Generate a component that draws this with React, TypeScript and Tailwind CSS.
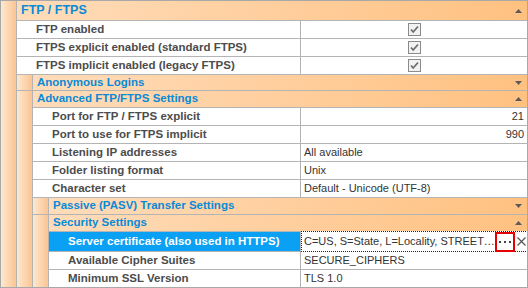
import React from "react";

// Indent strip shown left of nested rows
function Strips({ n }: { n: number }) {
  return (
    <>
      {Array.from({ length: n }).map((_, i) => (
        <div
          key={i}
          className="w-4 shrink-0 border-r border-[#b4b4b4] bg-gradient-to-r from-[#fee7d0] to-[#fbc592]"
        />
      ))}
    </>
  );
}

function Arrow({ up }: { up: boolean }) {
  return (
    <svg width="7" height="4" viewBox="0 0 7 4" className="shrink-0">
      {up ? (
        <polygon points="3.5,0 7,4 0,4" fill="#5a5a5a" />
      ) : (
        <polygon points="0,0 7,0 3.5,4" fill="#5a5a5a" />
      )}
    </svg>
  );
}

interface CategoryProps {
  level: number;
  label: string;
  expanded: boolean;
  height: string;
  big?: boolean;
}

function CategoryRow({ level, label, expanded, height, big }: CategoryProps) {
  return (
    <div className={`flex ${height}`}>
      <Strips n={level} />
      {/* own expand strip, continuous with children when expanded */}
      <div
        className={`w-4 shrink-0 border-r border-[#b4b4b4] bg-gradient-to-r from-[#fee7d0] to-[#fbc592] ${
          expanded ? "" : "border-b"
        }`}
      />
      <div className="flex flex-1 items-center justify-between border-b border-[#b4b4b4] bg-gradient-to-r from-[#ffdcba] to-[#ffc180] pl-1 pr-[5px]">
        <span
          className={`font-bold text-[#0a8ad6] ${
            big ? "text-[12.5px]" : "text-[11.5px]"
          } leading-none`}
        >
          {label}
        </span>
        <Arrow up={expanded} />
      </div>
    </div>
  );
}

function Checkbox() {
  return (
    <svg width="13" height="13" viewBox="0 0 13 13">
      <rect x="0.5" y="0.5" width="12" height="12" fill="#f2f2f2" stroke="#8a8a8a" />
      <path d="M3 6.5 L5.2 9 L10 3.5" fill="none" stroke="#6e6e6e" strokeWidth="1.8" />
    </svg>
  );
}

interface PropProps {
  level: number;
  label: string;
  value?: React.ReactNode;
  align?: "left" | "right" | "center";
  last?: boolean;
}

function PropRow({ level, label, value, align = "left", last }: PropProps) {
  const justify =
    align === "right" ? "justify-end" : align === "center" ? "justify-center" : "justify-start";
  return (
    <div className={`flex ${last ? "h-[17px]" : "h-[18px]"}`}>
      <div className="flex w-[300px] shrink-0">
        <Strips n={level} />
        <div
          className={`flex flex-1 items-center border-r border-[#b4b4b4] bg-white pl-[19px] text-[11.5px] font-bold leading-none text-[#4c4c4c] ${
            last ? "" : "border-b"
          }`}
        >
          {label}
        </div>
      </div>
      <div
        className={`flex flex-1 items-center ${justify} border-[#b4b4b4] bg-white pl-[3px] pr-[3px] text-[11px] leading-none text-[#333] ${
          last ? "" : "border-b"
        }`}
      >
        {value}
      </div>
    </div>
  );
}

// Selected row with inline editor and browse button
function SelectedRow() {
  return (
    <div className="flex h-[20px]">
      <div className="flex w-[300px] shrink-0">
        <Strips n={3} />
        <div className="flex flex-1 items-center border-b border-r border-[#b4b4b4] bg-[#0aa0f4] pl-[19px] text-[11.5px] font-bold leading-none text-white">
          Server certificate (also used in HTTPS)
        </div>
      </div>
      <div className="-mt-px flex h-[21px] flex-1 items-center border border-dotted border-[#222] bg-white text-[11px] leading-none text-[#333]">
        <span className="flex-1 truncate pl-[2px]">C=US, S=State, L=Locality, STREET…</span>
        <div className="flex h-[20px] w-[20px] shrink-0 items-center justify-center border-2 border-[#e60000]">
          <svg width="12" height="2" viewBox="0 0 12 2">
            <rect x="0" y="0" width="2" height="2" fill="#444" />
            <rect x="5" y="0" width="2" height="2" fill="#444" />
            <rect x="10" y="0" width="2" height="2" fill="#444" />
          </svg>
        </div>
        <div className="flex w-[14px] shrink-0 items-center justify-center">
          <svg width="9" height="9" viewBox="0 0 9 9">
            <path d="M0.5 0.5 L8.5 8.5 M8.5 0.5 L0.5 8.5" stroke="#555" strokeWidth="1.2" />
          </svg>
        </div>
      </div>
    </div>
  );
}

export default function App() {
  return (
    <div className="flex h-[288px] w-[528px] flex-col overflow-hidden border border-[#a8a8a8] bg-white font-['Liberation_Sans',Arial,sans-serif]">
      <CategoryRow level={0} label="FTP / FTPS" expanded height="h-[20px]" big />
      <PropRow level={1} label="FTP enabled" value={<Checkbox />} align="center" />
      <PropRow level={1} label="FTPS explicit enabled (standard FTPS)" value={<Checkbox />} align="center" />
      <PropRow level={1} label="FTPS implicit enabled (legacy FTPS)" value={<Checkbox />} align="center" />
      <CategoryRow level={1} label="Anonymous Logins" expanded={false} height="h-[16px]" />
      <CategoryRow level={1} label="Advanced FTP/FTPS Settings" expanded height="h-[17px]" />
      <PropRow level={2} label="Port for FTP / FTPS explicit" value="21" align="right" />
      <PropRow level={2} label="Port to use for FTPS implicit" value="990" align="right" />
      <PropRow level={2} label="Listening IP addresses" value="All available" />
      <PropRow level={2} label="Folder listing format" value="Unix" />
      <PropRow level={2} label="Character set" value="Default - Unicode (UTF-8)" />
      <CategoryRow level={2} label="Passive (PASV) Transfer Settings" expanded={false} height="h-[17px]" />
      <CategoryRow level={2} label="Security Settings" expanded height="h-[17px]" />
      <SelectedRow />
      <PropRow level={3} label="Available Cipher Suites" value="SECURE_CIPHERS" />
      <PropRow level={3} label="Minimum SSL Version" value="TLS 1.0" last />
    </div>
  );
}
